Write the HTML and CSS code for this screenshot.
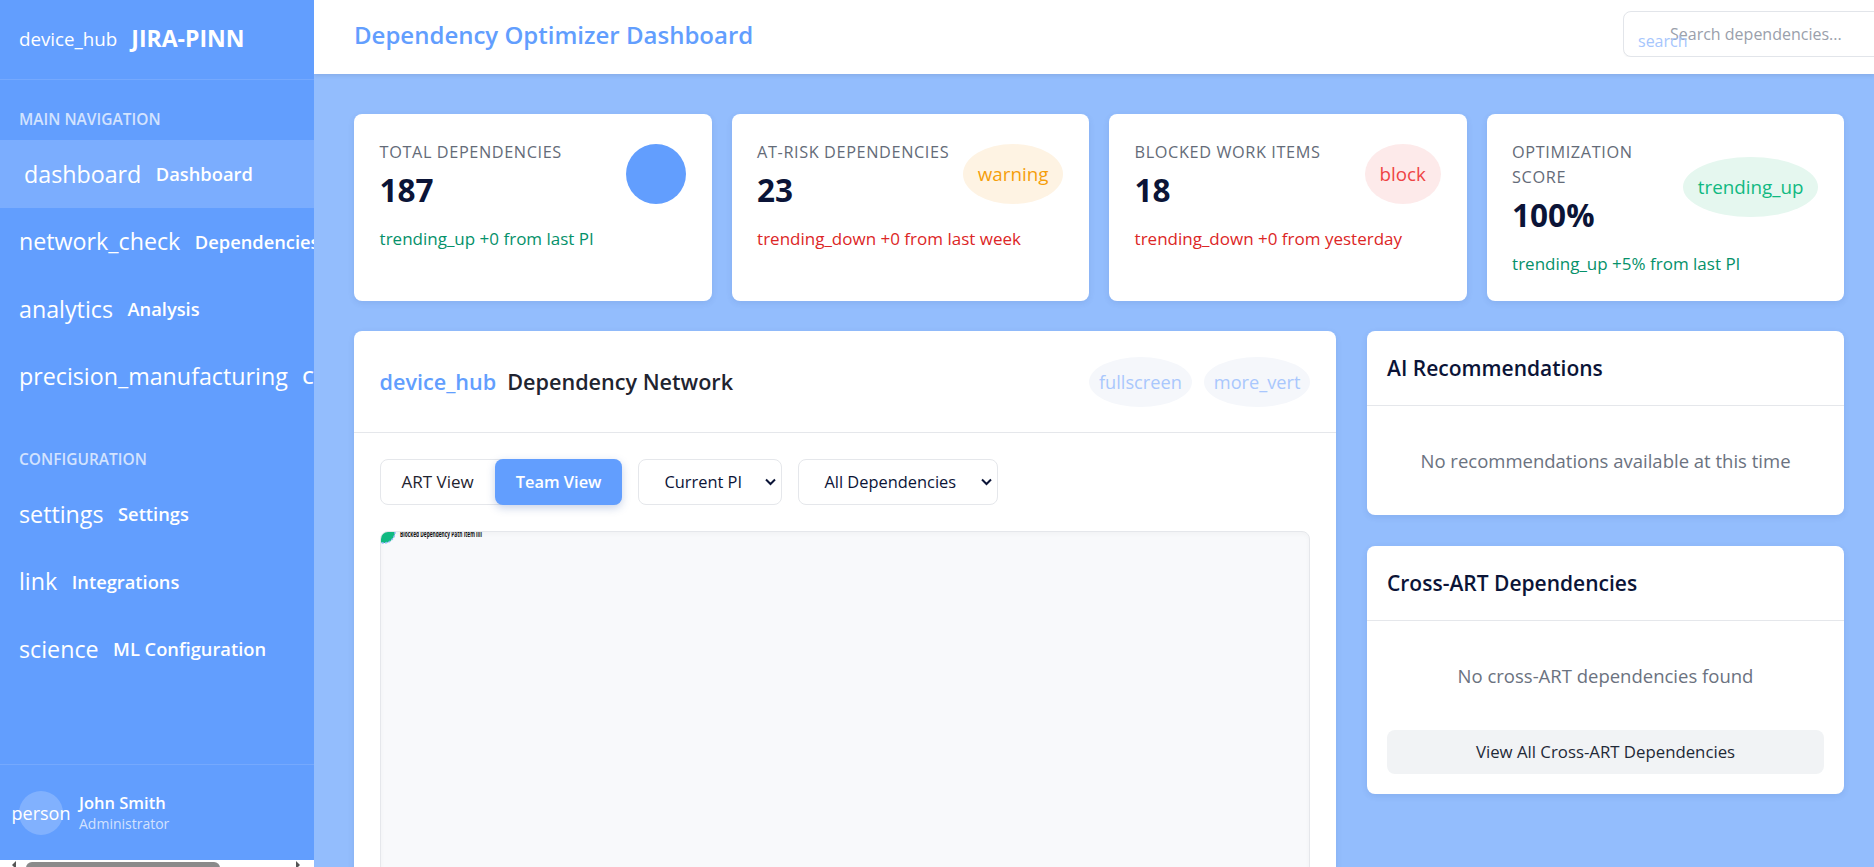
FILE: index.html
```html
<!DOCTYPE html>
<html lang="en">
<head>
<meta charset="utf-8">
<title>Dependency Optimizer Dashboard</title>
<link rel="stylesheet" href="styles.css">
</head>
<body>
<div class="app">
  <aside class="sidebar">
    <div class="brand">
      <span class="brand-icon">device_hub</span>
      <span class="brand-name">JIRA-PINN</span>
    </div>
    <nav class="nav">
      <div class="nav-section">
        <div class="nav-label">MAIN NAVIGATION</div>
        <a class="nav-item active"><span class="nav-icon">dashboard</span><span class="nav-text">Dashboard</span></a>
        <a class="nav-item"><span class="nav-icon">network_check</span><span class="nav-text">Dependencies</span></a>
        <a class="nav-item"><span class="nav-icon">analytics</span><span class="nav-text">Analysis</span></a>
        <a class="nav-item"><span class="nav-icon">precision_manufacturing</span><span class="nav-text">Capacity Planning</span></a>
      </div>
      <div class="nav-section">
        <div class="nav-label">CONFIGURATION</div>
        <a class="nav-item"><span class="nav-icon">settings</span><span class="nav-text">Settings</span></a>
        <a class="nav-item"><span class="nav-icon">link</span><span class="nav-text">Integrations</span></a>
        <a class="nav-item"><span class="nav-icon">science</span><span class="nav-text">ML Configuration</span></a>
      </div>
    </nav>
    <div class="user">
      <div class="avatar">person</div>
      <div class="user-info">
        <div class="user-name">John Smith</div>
        <div class="user-role">Administrator</div>
      </div>
    </div>
    <div class="hscroll">
      <span class="arrow arrow-left"></span>
      <span class="thumb"></span>
      <span class="arrow arrow-right"></span>
    </div>
  </aside>

  <main class="main">
    <header class="topbar">
      <h1 class="page-title">Dependency Optimizer Dashboard</h1>
      <div class="search">
        <span class="search-icon">search</span>
        <input class="search-input" type="text" placeholder="Search dependencies...">
      </div>
    </header>

    <div class="content">
      <div class="stats">
        <div class="stat-card">
          <div class="stat-top">
            <div>
              <div class="stat-title">TOTAL DEPENDENCIES</div>
              <div class="stat-value">187</div>
            </div>
            <div class="stat-icon icon-primary"></div>
          </div>
          <div class="trend up">trending_up +0 from last PI</div>
        </div>
        <div class="stat-card">
          <div class="stat-top">
            <div>
              <div class="stat-title">AT-RISK DEPENDENCIES</div>
              <div class="stat-value">23</div>
            </div>
            <div class="stat-icon icon-warning">warning</div>
          </div>
          <div class="trend down">trending_down +0 from last week</div>
        </div>
        <div class="stat-card">
          <div class="stat-top">
            <div>
              <div class="stat-title">BLOCKED WORK ITEMS</div>
              <div class="stat-value">18</div>
            </div>
            <div class="stat-icon icon-danger">block</div>
          </div>
          <div class="trend down">trending_down +0 from yesterday</div>
        </div>
        <div class="stat-card">
          <div class="stat-top">
            <div>
              <div class="stat-title wrap">OPTIMIZATION SCORE</div>
              <div class="stat-value">100%</div>
            </div>
            <div class="stat-icon icon-success">trending_up</div>
          </div>
          <div class="trend up">trending_up +5% from last PI</div>
        </div>
      </div>

      <div class="panels">
        <section class="card network">
          <div class="network-head">
            <h2 class="network-title"><span class="title-icon">device_hub</span>Dependency Network</h2>
            <div class="head-actions">
              <button class="icon-btn">fullscreen</button>
              <button class="icon-btn">more_vert</button>
            </div>
          </div>
          <div class="network-body">
            <div class="filters">
              <div class="segmented">
                <button class="seg">ART View</button>
                <button class="seg on">Team View</button>
              </div>
              <div class="select sel-pi"><span>Current PI</span>
                <svg class="chev" width="11" height="8" viewBox="0 0 11 8"><path d="M1 1.5l4.5 4.5L10 1.5" fill="none" stroke="#0b1437" stroke-width="2"/></svg>
              </div>
              <div class="select sel-deps"><span>All Dependencies</span>
                <svg class="chev" width="11" height="8" viewBox="0 0 11 8"><path d="M1 1.5l4.5 4.5L10 1.5" fill="none" stroke="#0b1437" stroke-width="2"/></svg>
              </div>
            </div>
            <div class="canvas">
              <svg class="graph" width="120" height="20" viewBox="0 0 120 20">
                <circle cx="3" cy="0" r="11" fill="#10b981" stroke="#8fb6fb" stroke-width="1.5" stroke-dasharray="2 1.5"/>
                <text x="19" y="5" font-size="9" font-weight="700" textLength="82" lengthAdjust="spacingAndGlyphs" fill="#111">Blocked Dependency Path Item llll</text>
              </svg>
            </div>
          </div>
        </section>

        <div class="side-col">
          <section class="card side-card">
            <div class="side-head"><h3>AI Recommendations</h3></div>
            <div class="side-body">
              <p class="empty">No recommendations available at this time</p>
            </div>
          </section>
          <section class="card side-card">
            <div class="side-head"><h3>Cross-ART Dependencies</h3></div>
            <div class="side-body">
              <p class="empty">No cross-ART dependencies found</p>
              <button class="btn-full">View All Cross-ART Dependencies</button>
            </div>
          </section>
        </div>
      </div>
    </div>
  </main>
</div>
</body>
</html>
```
FILE: styles.css
```css
* { box-sizing: border-box; }

html, body {
  margin: 0;
  height: 100%;
}

body {
  font-family: "Open Sans", "Noto Sans", "DejaVu Sans", sans-serif;
  background: #93bdfd;
  color: #0b1437;
  overflow: hidden;
}

button {
  font-family: inherit;
  border: none;
  cursor: pointer;
}

.app {
  display: flex;
  height: 867px;
}

/* ---------- Sidebar ---------- */
.sidebar {
  width: 314px;
  flex: none;
  height: 867px;
  background: #629efe;
  color: #fff;
  display: flex;
  flex-direction: column;
  overflow: hidden;
}

.brand {
  height: 80px;
  flex: none;
  display: flex;
  align-items: center;
  gap: 14px;
  padding: 0 19px 3px;
  border-bottom: 1px solid rgba(255, 255, 255, 0.12);
  white-space: nowrap;
}

.brand-icon {
  font-size: 18.75px;
}

.brand-name {
  font-size: 23px;
  font-weight: 700;
}

.nav {
  flex: 1;
  min-height: 0;
  padding-top: 27px;
  white-space: nowrap;
}

.nav-section + .nav-section {
  margin-top: 37px;
}

.nav-label {
  padding: 0 19px;
  font-size: 15.5px;
  line-height: 24px;
  font-weight: 600;
  color: rgba(255, 255, 255, 0.72);
  margin-bottom: 9px;
}

.nav-item {
  display: flex;
  align-items: center;
  gap: 14.5px;
  height: 67.5px;
  padding: 0 19px;
  color: #fff;
  text-decoration: none;
}

.nav-item.active {
  background: rgba(255, 255, 255, 0.16);
  padding-left: 24px;
}

.nav-icon {
  font-size: 23.25px;
}

.nav-text {
  font-size: 18.3px;
  font-weight: 600;
}

.user {
  height: 96px;
  flex: none;
  display: flex;
  align-items: center;
  gap: 16px;
  padding: 0 19px;
  border-top: 1px solid rgba(255, 255, 255, 0.12);
}

.avatar {
  width: 44px;
  height: 44px;
  flex: none;
  border-radius: 50%;
  background: rgba(255, 255, 255, 0.2);
  display: flex;
  align-items: center;
  justify-content: center;
  font-size: 18px;
  white-space: nowrap;
}

.user-name {
  font-size: 16.5px;
  font-weight: 600;
  line-height: 22px;
}

.user-role {
  font-size: 14px;
  line-height: 20px;
  color: rgba(255, 255, 255, 0.72);
}

.hscroll {
  height: 7px;
  flex: none;
  background: #fff;
  display: flex;
  align-items: flex-start;
  padding: 2px 10px 0 8px;
  overflow: hidden;
}

.thumb {
  width: 194px;
  height: 12px;
  margin-left: 10px;
  border-radius: 6px;
  background: #8a8a8a;
}

.arrow {
  width: 0;
  height: 0;
  border: 4px solid transparent;
}

.arrow-left {
  border-right-color: #555;
  margin-top: -1px;
}

.arrow-right {
  border-left-color: #555;
  margin-left: auto;
  margin-top: -1px;
}

/* ---------- Main ---------- */
.main {
  flex: 1;
  min-width: 0;
  display: flex;
  flex-direction: column;
  overflow: hidden;
}

.topbar {
  height: 74px;
  flex: none;
  background: #fff;
  display: flex;
  align-items: flex-start;
  padding-left: 40px;
  box-shadow: 0 2px 4px rgba(0, 0, 0, 0.08);
  position: relative;
  z-index: 1;
}

.page-title {
  margin: 0;
  line-height: 70px;
  font-size: 24px;
  font-weight: 600;
  color: #629efe;
  white-space: nowrap;
}

.search {
  margin-left: auto;
  margin-top: 11px;
  width: 251px;
  height: 46px;
  position: relative;
  overflow: hidden;
  flex: none;
}

.search-input {
  width: 300px;
  height: 46px;
  border: 1px solid #e2e5ea;
  border-radius: 8px;
  padding: 0 16px 0 46px;
  font-family: inherit;
  font-size: 16px;
  color: #0b1437;
  outline: none;
  box-shadow: 0 1px 2px rgba(0, 0, 0, 0.04);
}

.search-input::placeholder {
  color: #9aa0ab;
}

.search-icon {
  position: absolute;
  left: 15px;
  top: 20px;
  font-size: 16px;
  line-height: 20px;
  color: #a6c6fd;
  z-index: 1;
}

.content {
  flex: 1;
  padding: 40px 30px 0 40px;
}

.stats {
  display: grid;
  grid-template-columns: repeat(4, minmax(0, 1fr));
  gap: 20px;
  margin-bottom: 30px;
}

.card,
.stat-card {
  background: #fff;
  border-radius: 8px;
  box-shadow: 0 2px 6px rgba(30, 60, 120, 0.1);
}

.stat-card {
  padding: 25.6px;
}

.stat-top {
  display: flex;
  justify-content: space-between;
  align-items: center;
}

.stat-title {
  font-size: 16.3px;
  line-height: 25px;
  font-weight: 500;
  letter-spacing: 0.6px;
  color: #646b78;
  white-space: nowrap;
}

.stat-title.wrap {
  white-space: normal;
}

.stat-value {
  margin-top: 6px;
  font-size: 31.5px;
  line-height: 38px;
  font-weight: 700;
  color: #0b1437;
}

.stat-icon {
  flex: none;
  height: 60px;
  min-width: 60px;
  padding: 0 15px;
  border-radius: 50%;
  display: flex;
  align-items: center;
  justify-content: center;
  font-size: 18.8px;
}

.icon-primary { background: #629efe; color: #629efe; }
.icon-warning { background: #fef3e3; color: #f59e0b; }
.icon-danger { background: #fdeaea; color: #ef4444; }
.icon-success { background: #e5f7ef; color: #10b981; }

.trend {
  margin-top: 18px;
  font-size: 17px;
  line-height: 24px;
  font-weight: 500;
}

.trend.up { color: #05916a; }
.trend.down { color: #dc2626; }

/* ---------- Panels ---------- */
.panels {
  display: grid;
  grid-template-columns: minmax(0, 1fr) 477px;
  gap: 31px;
  align-items: start;
}

.network-head {
  display: flex;
  justify-content: space-between;
  align-items: center;
  padding: 25.6px;
  border-bottom: 1px solid #e5e7eb;
}

.network-title {
  margin: 0;
  display: flex;
  align-items: center;
  gap: 11px;
  font-size: 21.6px;
  font-weight: 600;
  color: #1f2430;
}

.title-icon {
  color: #629efe;
}

.head-actions {
  display: flex;
  gap: 12px;
}

.icon-btn {
  height: 50px;
  padding: 0 10px;
  border-radius: 50%;
  background: #f5f7fb;
  color: #a9c7fd;
  font-size: 18.2px;
}

.network-body {
  padding: 25.6px;
}

.filters {
  display: flex;
  gap: 16px;
  margin-bottom: 25.6px;
}

.segmented {
  display: flex;
  height: 46px;
  border: 1px solid #e5e7eb;
  border-radius: 8px;
}

.seg {
  padding: 0 21px;
  background: transparent;
  font-size: 17px;
  font-weight: 500;
  color: #1f2430;
  border-radius: 8px;
}

.seg.on {
  margin: -1px -1px -1px 0;
  padding: 0 21px;
  background: #629efe;
  color: #fff;
  font-size: 16.4px;
  font-weight: 600;
  box-shadow: 0 3px 8px rgba(40, 80, 160, 0.25);
}

.select {
  height: 46px;
  border: 1px solid #e5e7eb;
  border-radius: 8px;
  display: flex;
  align-items: center;
  justify-content: space-between;
  padding: 0 5px 0 25px;
  font-size: 16.4px;
  color: #0b1437;
  background: #fff;
}

.sel-pi { width: 144px; }
.sel-deps { width: 200px; }

.canvas {
  height: 500px;
  background: #f8f9fb;
  border: 1px solid #e5e7eb;
  border-radius: 8px;
  box-shadow: inset 0 2px 4px rgba(0, 0, 0, 0.03);
  overflow: hidden;
}

.graph {
  display: block;
}

.side-col {
  display: flex;
  flex-direction: column;
  gap: 30.5px;
}

.side-head {
  padding: 22px 20px;
  border-bottom: 1px solid #e5e7eb;
}

.side-head h3 {
  margin: 0;
  font-size: 21px;
  line-height: 30px;
  font-weight: 600;
  color: #0b1437;
}

.side-body {
  padding: 20px;
}

.empty {
  margin: 0;
  padding: 21px 0;
  text-align: center;
  font-size: 18.5px;
  line-height: 27px;
  color: #6b7280;
}

.btn-full {
  display: block;
  width: 100%;
  height: 44px;
  margin-top: 20px;
  border-radius: 8px;
  background: #f1f3f5;
  font-size: 16.8px;
  font-weight: 500;
  color: #1f2937;
}
```
